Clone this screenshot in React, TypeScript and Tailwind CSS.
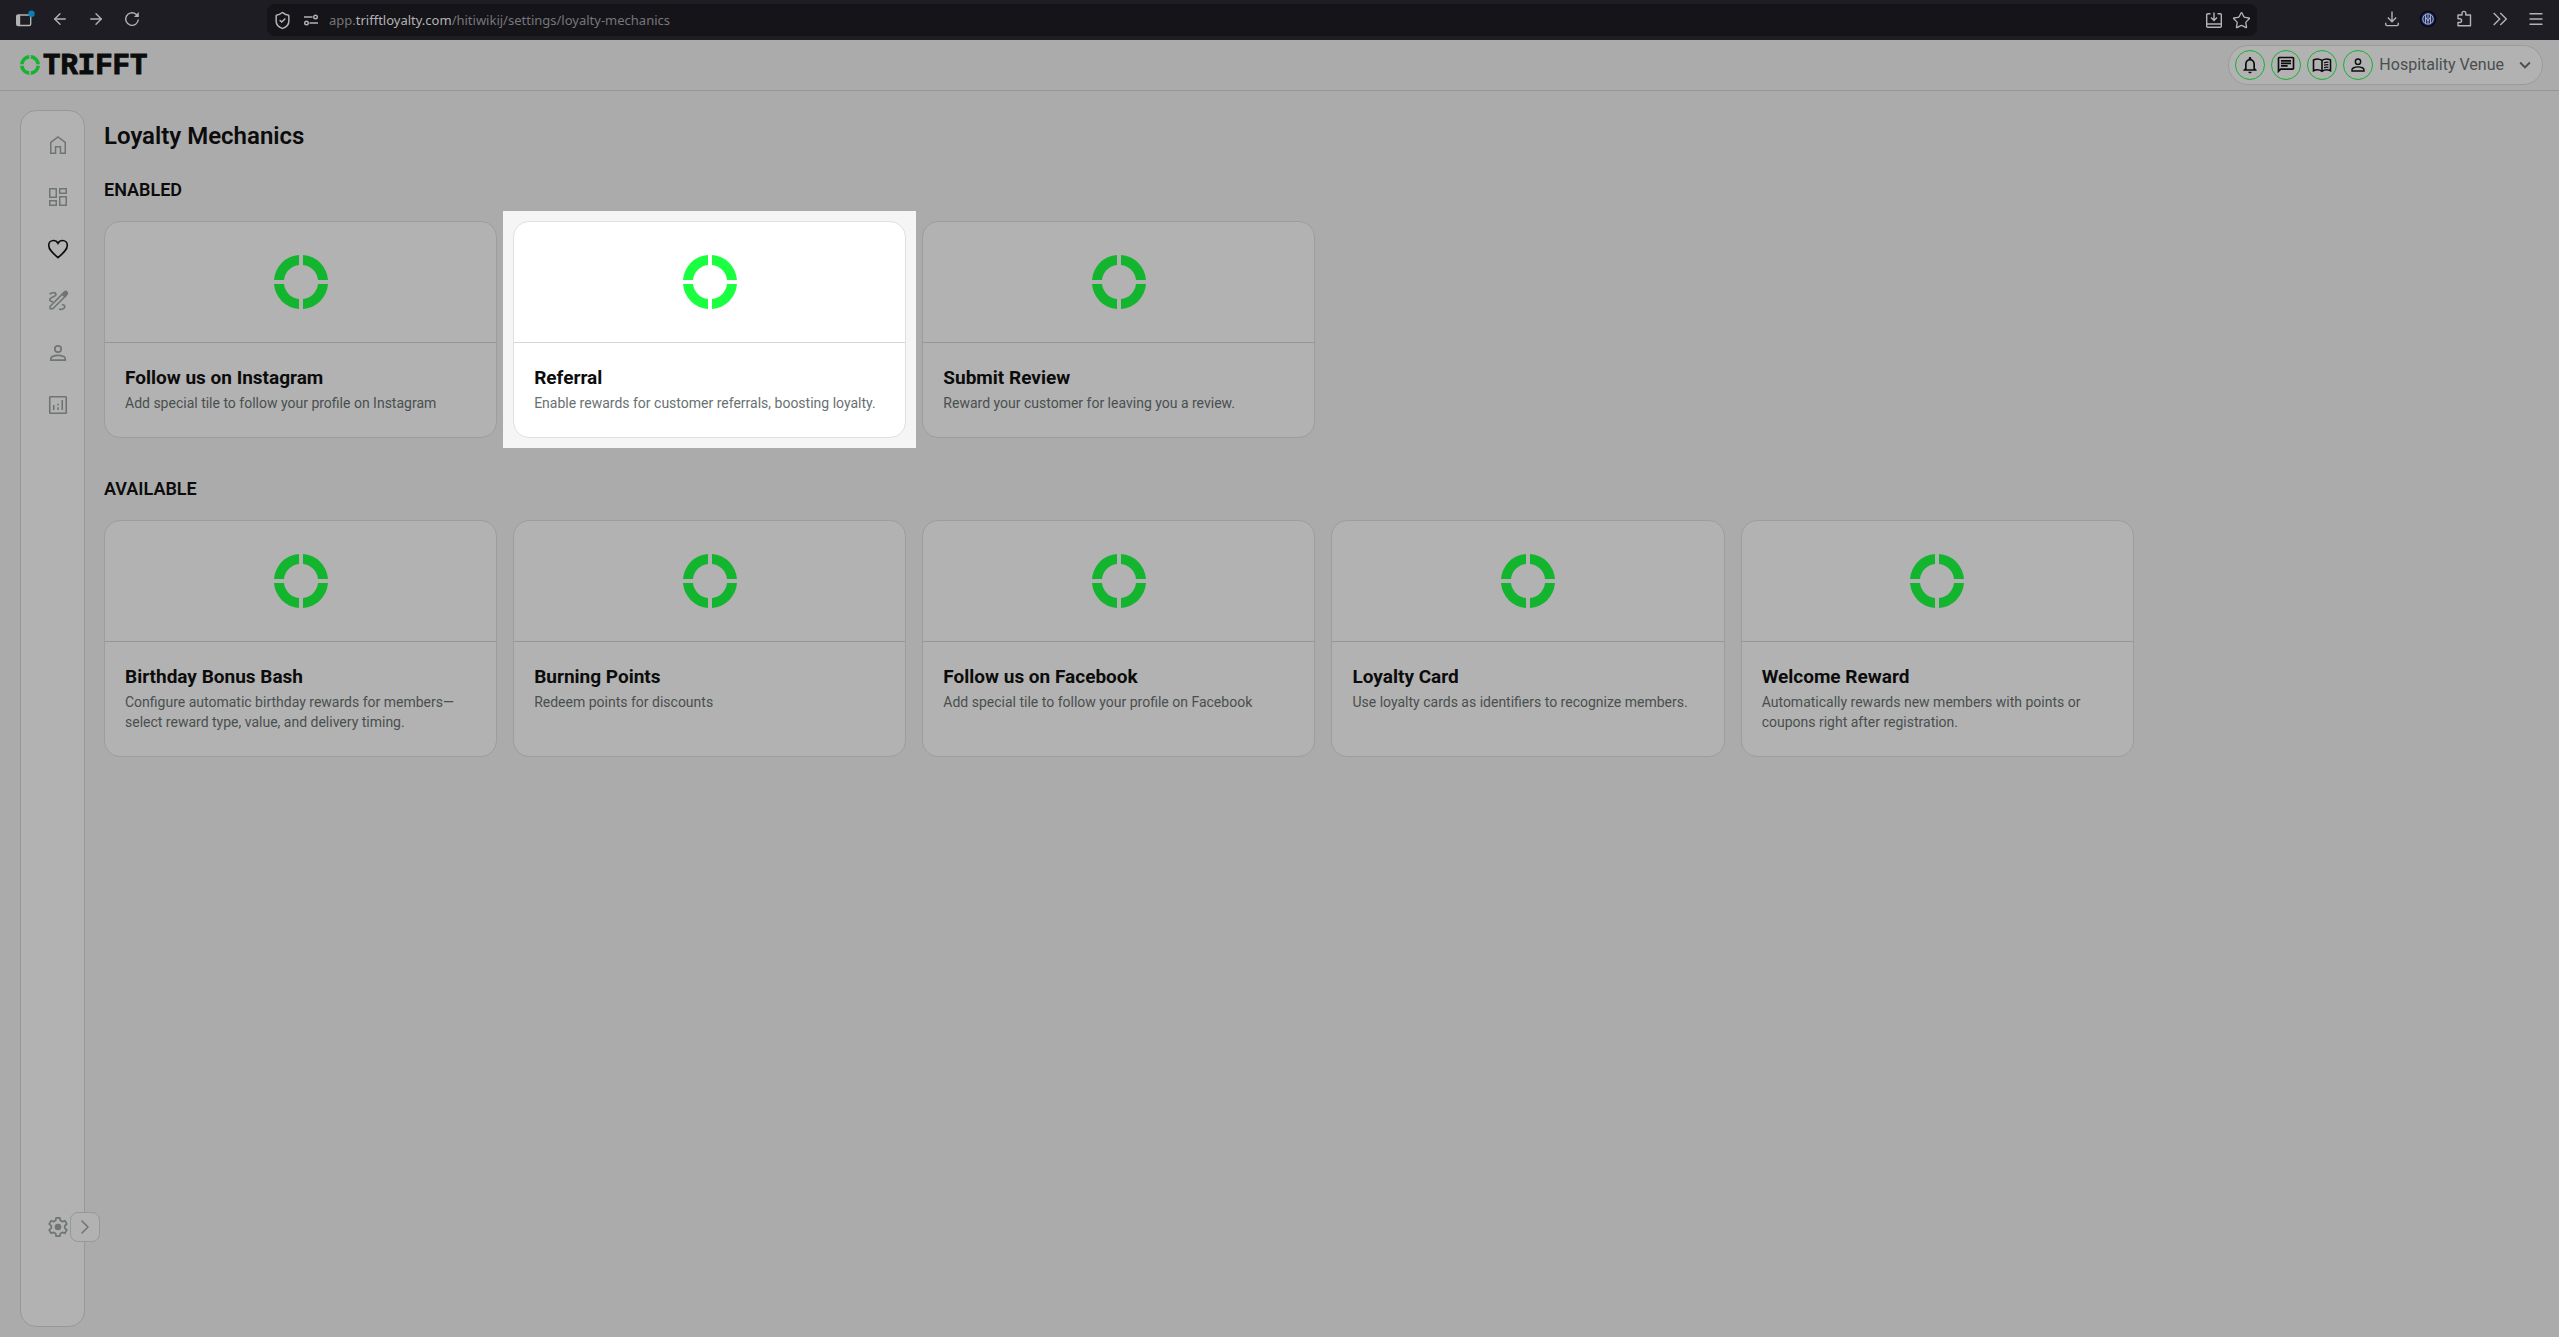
import React from "react";
import {
  MdKeyboardArrowDown,
  MdOutlineNotifications,
  MdOutlineChat,
} from "react-icons/md";
import {
  ArrowLeft,
  ArrowRight,
  ChevronRight,
  Menu,
  ShieldCheck,
  Star,
} from "lucide-react";

// --- Interfaces ---
interface Mechanic {
  title: string;
  description: string;
  highlighted?: boolean;
}

interface IconProps {
  className?: string;
}

// --- Data ---
const enabled: Mechanic[] = [
  {
    title: "Follow us on Instagram",
    description: "Add special tile to follow your profile on Instagram",
  },
  {
    title: "Referral",
    description: "Enable rewards for customer referrals, boosting loyalty.",
    highlighted: true,
  },
  {
    title: "Submit Review",
    description: "Reward your customer for leaving you a review.",
  },
];

const available: Mechanic[] = [
  {
    title: "Birthday Bonus Bash",
    description:
      "Configure automatic birthday rewards for members—select reward type, value, and delivery timing.",
  },
  { title: "Burning Points", description: "Redeem points for discounts" },
  {
    title: "Follow us on Facebook",
    description: "Add special tile to follow your profile on Facebook",
  },
  {
    title: "Loyalty Card",
    description: "Use loyalty cards as identifiers to recognize members.",
  },
  {
    title: "Welcome Reward",
    description:
      "Automatically rewards new members with points or coupons right after registration.",
  },
];

// --- Icons ---
const RingLogo: React.FC<IconProps> = ({ className }) => (
  <svg viewBox="0 0 54 54" className={className} fill="currentColor" aria-hidden="true">
    <path d="M25 0v10A17 17 0 0 0 10 25H0A27 27 0 0 1 25 0Z" />
    <path d="M29 0v10A17 17 0 0 1 44 25h10A27 27 0 0 0 29 0Z" />
    <path d="M25 54V44A17 17 0 0 1 10 29H0a27 27 0 0 0 25 25Z" />
    <path d="M29 54V44a17 17 0 0 0 15-15h10a27 27 0 0 1-25 25Z" />
  </svg>
);

const HomeIcon: React.FC = () => (
  <svg viewBox="0 0 24 24" className="size-6" fill="none" stroke="currentColor" strokeWidth="1.500" aria-hidden="true">
    <path d="M4.750 9.400 12 3.900l7.250 5.500v10.850h-4.800V13.700h-4.900v6.550h-4.800Z" />
  </svg>
);

const DashboardIcon: React.FC = () => (
  <svg viewBox="0 0 24 24" className="size-6" fill="none" stroke="currentColor" strokeWidth="1.500" aria-hidden="true">
    <path d="M3.750 3.750h6.500v8.500h-6.500ZM13.750 3.750h6.500v4.500h-6.500ZM3.750 15.750h6.500v4.500h-6.500ZM13.750 11.750h6.500v8.500h-6.500Z" />
  </svg>
);

const HeartIcon: React.FC = () => (
  <svg viewBox="0 0 24 24" className="size-6" fill="none" stroke="currentColor" strokeWidth="1.600" aria-hidden="true">
    <path d="M12 20.600C6 15.400 2.700 12.300 2.700 8.400 2.700 5.600 4.800 3.500 7.500 3.500c1.800 0 3.500 1 4.500 2.900 1-1.900 2.700-2.900 4.500-2.900 2.700 0 4.800 2.100 4.800 4.900 0 3.900-3.300 7-9.300 12.200Z" />
  </svg>
);

const DesignIcon: React.FC = () => (
  <svg viewBox="0 0 24 24" className="size-6" fill="none" stroke="currentColor" strokeWidth="1.600" aria-hidden="true">
    <path d="M3.600 5.300C5 3.500 9.500 2.800 10 5.200c.5 2.700-6.300 2.900-6.300 5.400 0 1.500 1.300 2 3.300 2.100" />
    <path d="M13 20.300c3.600.3 5.800-.9 5.800-2.600 0-1.300-1-1.900-2.900-2.200" />
    <path d="M4.200 17.200 17.500 3.900l2.600 2.600L6.800 19.800H4.200v-2.600Z" />
    <path d="m16.200 5.200 2.200-2.200c.8-.8 1.700-.8 2.500 0s.8 1.700 0 2.500l-2.200 2.200Z" fill="currentColor" />
  </svg>
);

const PersonIcon: React.FC<IconProps> = ({ className = "size-6" }) => (
  <svg viewBox="0 0 24 24" className={className} fill="none" stroke="currentColor" strokeWidth="1.700" aria-hidden="true">
    <circle cx="12" cy="8" r="3.200" />
    <path d="M4.800 19.200v-1.500c0-1 .6-1.700 1.500-2.100 3.700-1.700 7.700-1.700 11.400 0 .9.400 1.500 1.100 1.500 2.100v1.500Z" />
  </svg>
);

const AnalyticsIcon: React.FC = () => (
  <svg viewBox="0 0 24 24" className="size-6" fill="none" stroke="currentColor" strokeWidth="1.600" aria-hidden="true">
    <rect x="3.750" y="3.750" width="16.500" height="16.500" rx="0.500" />
    <path d="M7.750 12v5M12 14.200V17M12 10.800v1.700M16.250 7v10" />
  </svg>
);

const GearIcon: React.FC = () => (
  <svg viewBox="0 0 24 24" className="size-6" fill="none" stroke="currentColor" strokeWidth="1.700" strokeLinejoin="round" aria-hidden="true">
    <path d="M10.100 2.800h3.800l.5 2.700 1.900 1.100 2.600-.9 1.900 3.300-2.100 1.800v2.400l2.100 1.800-1.900 3.300-2.600-.9-1.900 1.100-.5 2.700h-3.800l-.5-2.700-1.900-1.100-2.600.9L3.200 15l2.100-1.800v-2.400L3.200 9l1.900-3.300 2.600.9 1.900-1.100Z" />
    <circle cx="12" cy="12" r="3.300" fill="currentColor" stroke="none" />
  </svg>
);

const BookIcon: React.FC = () => (
  <svg viewBox="0 0 24 24" className="size-5" fill="none" stroke="currentColor" strokeWidth="1.900" aria-hidden="true">
    <path d="M12 19.500c-3-2-7-2.200-10.200-.7V6C5 4.300 9 4.500 12 6.500c3-2 7-2.200 10.200-.5v12.800c-3.200-1.500-7.200-1.300-10.200.7ZM12 6.500v13" />
    <path d="M14.500 9.500c1.600-.8 3.500-1 5.200-.7M14.500 12.500c1.600-.8 3.500-1 5.200-.7M14.500 15.500c1.600-.8 3.500-1 5.200-.7" strokeWidth="1.500" />
  </svg>
);

const WindowIcon: React.FC = () => (
  <svg viewBox="0 0 20 18" className="h-[18px] w-5" aria-hidden="true">
    <rect x="1.700" y="5" width="14" height="10.500" rx="1.500" fill="none" stroke="#b3b3b5" strokeWidth="1.400" />
    <path d="M1.700 5h3.500v10.500H1.700Z" fill="#b3b3b5" />
    <circle cx="16.500" cy="3.800" r="3.200" fill="#0a7fb5" />
  </svg>
);

const ReloadIcon: React.FC = () => (
  <svg viewBox="0 0 18 18" className="size-[18px]" fill="none" stroke="currentColor" strokeWidth="1.400" aria-hidden="true">
    <path d="M15.300 9.500A6.300 6.300 0 1 1 13 4.200l1 1" />
    <path d="M15.800 2v5H11Z" fill="currentColor" stroke="none" />
  </svg>
);

const PermissionsIcon: React.FC = () => (
  <svg viewBox="0 0 16 12" className="h-3 w-4" fill="none" stroke="currentColor" strokeWidth="1.400" aria-hidden="true">
    <path d="M1 3h8.500M6.500 9H15" />
    <circle cx="12.500" cy="3" r="1.800" />
    <circle cx="3.500" cy="9" r="1.800" />
  </svg>
);

const InstallIcon: React.FC = () => (
  <svg viewBox="0 0 18 18" className="size-[18px]" fill="none" stroke="currentColor" strokeWidth="1.400" aria-hidden="true">
    <path d="M5.500 2.700H2.700a1 1 0 0 0-1 1v11.600a1 1 0 0 0 1 1h12.600a1 1 0 0 0 1-1V3.700a1 1 0 0 0-1-1h-2.800M1.700 13h14.600M9 1.500V9M6 6.500l3 3 3-3" />
  </svg>
);

const DownloadIcon: React.FC = () => (
  <svg viewBox="0 0 18 18" className="size-[18px]" fill="none" stroke="currentColor" strokeWidth="1.400" aria-hidden="true">
    <path d="M9 1.500v10M4.800 7.500 9 11.700l4.200-4.200M2.700 12.700v1.600a1.300 1.300 0 0 0 1.300 1.300h10a1.300 1.300 0 0 0 1.300-1.300v-1.600" />
  </svg>
);

const ClubBadge: React.FC = () => (
  <svg viewBox="0 0 18 18" className="size-[18px]" aria-hidden="true">
    <circle cx="9" cy="9" r="8.300" fill="#06080f" />
    <circle cx="9" cy="9" r="6.800" fill="#1c2a70" />
    <circle cx="9" cy="9" r="5.200" fill="none" stroke="#a9adbb" strokeWidth="1" />
    <path d="M6.500 5v8M9 4v10M11.500 5v8M6.500 7 9 11l2.500-4" fill="none" stroke="#a9adbb" strokeWidth="1" />
  </svg>
);

const PuzzleIcon: React.FC = () => (
  <svg viewBox="0 0 18 18" className="size-[18px]" fill="none" stroke="currentColor" strokeWidth="1.400" strokeLinejoin="round" aria-hidden="true">
    <path d="M3 5h4V3.300a1.900 1.900 0 0 1 3.800 0V5h4.700v10.800H3v-3.300h1.700a1.900 1.900 0 0 0 0-3.800H3Z" />
  </svg>
);

const DoubleChevronIcon: React.FC = () => (
  <svg viewBox="0 0 18 18" className="size-[18px]" fill="none" stroke="currentColor" strokeWidth="1.400" aria-hidden="true">
    <path d="m2.700 3 6 6-6 6M9.300 3l6 6-6 6" />
  </svg>
);

// --- Components ---
const BrowserBar: React.FC = () => (
  <div className="flex h-10 items-center bg-[#1e1d24] text-[#b3b3b5]">
    <div className="flex w-[267px] shrink-0 items-center gap-[18px] pb-0.5 pl-[15px]">
      <button aria-label="Sidebar" className="-mr-0.5"><WindowIcon /></button>
      <button aria-label="Back"><ArrowLeft size={18} strokeWidth={1.800} /></button>
      <button aria-label="Forward"><ArrowRight size={18} strokeWidth={1.800} /></button>
      <button aria-label="Reload"><ReloadIcon /></button>
    </div>
    <div className="flex h-8 flex-1 items-center rounded-lg bg-[#151419] pr-1.5 pl-1.5">
      <ShieldCheck size={19} strokeWidth={1.900} />
      <span className="ml-[11px]"><PermissionsIcon /></span>
      <span className="ml-[10px] pt-0.5 font-['Noto_Sans',sans-serif] text-[13px] text-[#77767b]">
        app.<span className="text-[#b3b3b5]">trifftloyalty.com</span>/hitiwikij/settings/loyalty-mechanics
      </span>
      <span className="ml-auto flex items-center gap-[9px]">
        <InstallIcon />
        <Star size={19} strokeWidth={1.700} />
      </span>
    </div>
    <div className="flex w-[302px] shrink-0 items-center justify-end gap-[18px] pr-[14px] pb-0.5">
      <button aria-label="Downloads"><DownloadIcon /></button>
      <button aria-label="Club extension"><ClubBadge /></button>
      <button aria-label="Extensions"><PuzzleIcon /></button>
      <button aria-label="More tools"><DoubleChevronIcon /></button>
      <button aria-label="Menu"><Menu size={18} strokeWidth={1.800} /></button>
    </div>
  </div>
);

const RoundButton: React.FC<{ label: string; children: React.ReactNode }> = ({
  label,
  children,
}) => (
  <button
    aria-label={label}
    className="flex size-[30px] items-center justify-center rounded-full border border-[#13b52e] text-[#0c0c0c]"
  >
    {children}
  </button>
);

const Header: React.FC = () => (
  <header className="flex h-[51px] items-center justify-between border-b border-[#959797] pr-4 pl-5">
    <a href="#" className="flex items-center gap-[3px]" aria-label="TRIFFT">
      <RingLogo className="size-5 text-[#13b52e]" />
      <span className="pt-[3px] font-['Liberation_Mono',monospace] text-[29px] leading-none font-bold text-[#0c0c0c] [-webkit-text-stroke:1px_#0c0c0c]">
        TRIFFT
      </span>
    </a>
    <div className="flex h-10 items-center gap-1.5 rounded-full border border-[#9a9c9c] bg-[#b2b2b2] px-1.5">
      <RoundButton label="Notifications"><MdOutlineNotifications size={20} /></RoundButton>
      <RoundButton label="Messages"><MdOutlineChat size={20} /></RoundButton>
      <RoundButton label="Documentation"><BookIcon /></RoundButton>
      <RoundButton label="Profile"><PersonIcon className="size-5" /></RoundButton>
      <button className="flex items-center gap-2.5 text-base text-[#494f4f]">
        Hospitality Venue
        <MdKeyboardArrowDown size={22} />
      </button>
    </div>
  </header>
);

const navItems = [
  { label: "Home", icon: <HomeIcon /> },
  { label: "Dashboard", icon: <DashboardIcon /> },
  { label: "Loyalty", icon: <HeartIcon />, active: true },
  { label: "Design", icon: <DesignIcon /> },
  { label: "Customers", icon: <PersonIcon /> },
  { label: "Analytics", icon: <AnalyticsIcon /> },
];

const Sidebar: React.FC = () => (
  <nav className="relative flex w-[65px] shrink-0 flex-col rounded-2xl border border-[#959999] bg-[#b2b2b2] pt-[22px] pb-[87px] pl-[25px] text-[#6f7575]">
    <div className="flex flex-col gap-7">
      {navItems.map(({ label, icon, active }) => (
        <a key={label} href="#" aria-label={label} className={active ? "text-[#0c0c0c]" : ""}>
          {icon}
        </a>
      ))}
    </div>
    <a href="#" aria-label="Settings" className="mt-auto">
      <GearIcon />
    </a>
    <button
      aria-label="Expand menu"
      className="absolute -right-4 bottom-[84px] flex size-[30px] items-center justify-center rounded-lg border border-[#959999] bg-[#b2b2b2]"
    >
      <ChevronRight size={24} strokeWidth={1.500} />
    </button>
  </nav>
);

const MechanicCard: React.FC<{ mechanic: Mechanic }> = ({ mechanic }) => {
  const { title, description, highlighted } = mechanic;
  return (
    <li className={highlighted ? "bg-[#f5f5f5] outline-10 outline-[#f5f5f5]" : ""}>
      <a
        href="#"
        className={`flex h-full flex-col rounded-2xl border ${
          highlighted ? "border-[#e0e0e0] bg-white" : "border-[#9d9d9d] bg-[#b2b2b2]"
        }`}
      >
        <div
          className={`flex h-[121px] items-center justify-center border-b ${
            highlighted ? "border-[#d5d7d7]" : "border-[#959797]"
          }`}
        >
          <RingLogo className={`size-[54px] ${highlighted ? "text-[#1bff41]" : "text-[#13b52e]"}`} />
        </div>
        <div className="px-5 pt-5 pb-6">
          <h3 className="text-[19px] leading-[30px] font-bold text-[#0c0c0c]">{title}</h3>
          <p className={`text-sm leading-5 ${highlighted ? "text-[#697171]" : "text-[#494f4f]"}`}>
            {description}
          </p>
        </div>
      </a>
    </li>
  );
};

const MechanicSection: React.FC<{ heading: string; mechanics: Mechanic[] }> = ({
  heading,
  mechanics,
}) => (
  <section>
    <h2 className="text-lg leading-7 font-semibold text-[#0c0c0c]">{heading}</h2>
    <ul className="mt-[17px] grid grid-cols-6 gap-4">
      {mechanics.map((mechanic) => (
        <MechanicCard key={mechanic.title} mechanic={mechanic} />
      ))}
    </ul>
  </section>
);

const App: React.FC = () => (
  <div className="flex min-h-screen flex-col bg-[#ababab] font-[Roboto,sans-serif]">
    <BrowserBar />
    <Header />
    <div className="flex flex-1 pt-[19px] pr-4 pb-[10px] pl-5">
      <Sidebar />
      <main className="flex flex-1 flex-col pt-[10px] pl-[19px]">
        <h1 className="mb-6 text-2xl leading-8 font-semibold text-[#0c0c0c]">Loyalty Mechanics</h1>
        <div className="flex flex-col gap-[37px]">
          <MechanicSection heading="ENABLED" mechanics={enabled} />
          <MechanicSection heading="AVAILABLE" mechanics={available} />
        </div>
      </main>
    </div>
  </div>
);

export default App;
